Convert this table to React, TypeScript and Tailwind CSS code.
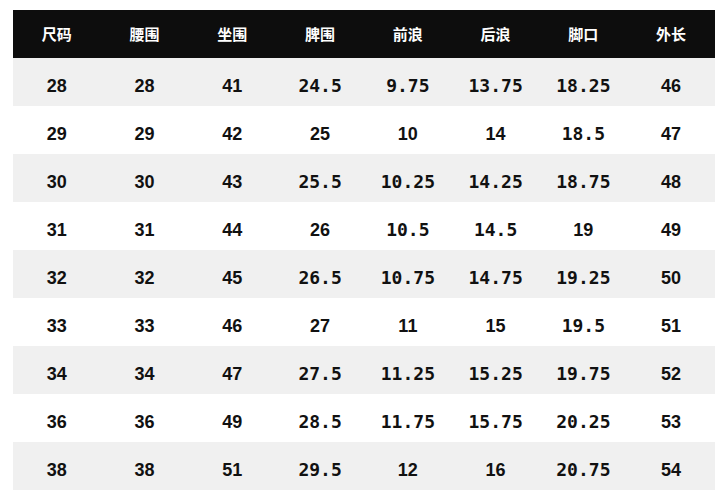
const headers = ['尺码', '腰围', '坐围', '脾围', '前浪', '后浪', '脚口', '外长'];

const rows: string[][] = [
  ['28', '28', '41', '24.5', '9.75', '13.75', '18.25', '46'],
  ['29', '29', '42', '25', '10', '14', '18.5', '47'],
  ['30', '30', '43', '25.5', '10.25', '14.25', '18.75', '48'],
  ['31', '31', '44', '26', '10.5', '14.5', '19', '49'],
  ['32', '32', '45', '26.5', '10.75', '14.75', '19.25', '50'],
  ['33', '33', '46', '27', '11', '15', '19.5', '51'],
  ['34', '34', '47', '27.5', '11.25', '15.25', '19.75', '52'],
  ['36', '36', '49', '28.5', '11.75', '15.75', '20.25', '53'],
  ['38', '38', '51', '29.5', '12', '16', '20.75', '54'],
];

export default function App() {
  return (
    <div className="h-[500px] w-[728px] bg-white pl-[13px] pt-[10px]">
      <div className="w-[702px]">
        <div className="grid h-[48px] grid-cols-8 items-center bg-[#0d0d0d] text-[15px] font-bold text-white [font-family:'Noto_Sans_CJK_SC',sans-serif]">
          {headers.map((h) => (
            <div key={h} className="text-center">
              {h}
            </div>
          ))}
        </div>
        {rows.map((r, i) => (
          <div
            key={r[0]}
            className={`grid h-[48px] grid-cols-8 items-baseline pt-[19px] text-[18px] leading-none font-bold text-[#111] ${
              i % 2 === 0 ? 'bg-[#f0f0f0]' : 'bg-white'
            }`}
          >
            {r.map((v, j) => (
              <div
                key={j}
                className={`text-center ${
                  v.includes('.')
                    ? "[font-family:'DejaVu_Sans_Mono',monospace]"
                    : "[font-family:'Liberation_Sans',sans-serif]"
                }`}
              >
                {v}
              </div>
            ))}
          </div>
        ))}
      </div>
    </div>
  );
}
